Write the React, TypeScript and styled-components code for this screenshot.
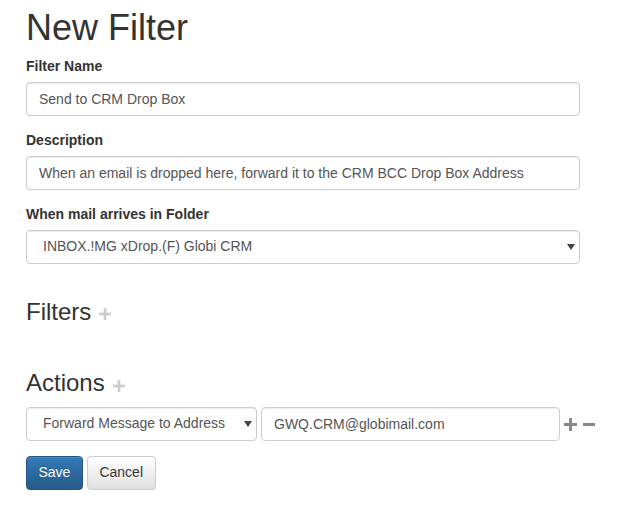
import React from "react";
import styled, { createGlobalStyle } from "styled-components";

const GlobalStyle = createGlobalStyle`
  html, body {
    margin: 0;
    padding: 0;
    background: #fff;
  }
  body {
    font-family: "Liberation Sans", Arial, Helvetica, sans-serif;
    font-size: 14px;
    line-height: 1.42857;
    color: #333;
  }
  * {
    box-sizing: border-box;
  }
`;

export const Page = styled.div`
  display: flex;
  flex-direction: column;
  align-items: flex-start;
  padding: 7.5px 0 0 26px;
`;

export const Title = styled.h1`
  font-size: 36px;
  font-weight: 400;
  line-height: 1.1;
  margin: 0 0 10px;
  color: #333;
`;

export const SectionTitle = styled.h3`
  font-size: 24px;
  font-weight: 400;
  line-height: 1.1;
  margin: 20px 0 10px;
  color: #333;
  display: flex;
  align-items: center;
  gap: 8px;
`;

export const FormGroup = styled.div`
  margin-bottom: 15px;
  width: 554px;
`;

export const Label = styled.label`
  display: block;
  font-weight: 700;
  margin-bottom: 5px;
`;

const fieldStyles = `
  display: block;
  height: 34px;
  padding: 6px 12px;
  font-family: "Liberation Sans", Arial, Helvetica, sans-serif;
  font-size: 14px;
  line-height: 1.42857;
  color: #555;
  background: #fff;
  border: 1px solid #ccc;
  border-radius: 4px;
  box-shadow: inset 0 1px 1px rgba(0, 0, 0, 0.075);
  outline: none;
`;

export const TextInput = styled.input<{ $width?: number }>`
  ${fieldStyles}
  flex: none;
  width: ${(p) => (p.$width ? `${p.$width}px` : "100%")};
`;

export const SelectWrap = styled.div<{ $width?: number }>`
  position: relative;
  width: ${(p) => (p.$width ? `${p.$width}px` : "100%")};
  flex: none;
`;

export const Select = styled.select`
  ${fieldStyles}
  width: 100%;
  padding-left: 16px;
  appearance: none;
  -webkit-appearance: none;
`;

export const Caret = styled.svg`
  position: absolute;
  right: 5px;
  top: 14px;
  pointer-events: none;
`;

export const EmptyList = styled.div`
  margin-bottom: 15px;
`;

export const ActionRow = styled.div`
  display: flex;
  align-items: center;
  margin-bottom: 15px;
`;

export const ActionInput = styled(TextInput)`
  margin-left: 4px;
`;

export const RowIcons = styled.div`
  display: flex;
  align-items: center;
  gap: 6px;
  margin-left: 4px;
  padding-top: 2px;
`;

export const Buttons = styled.div`
  display: flex;
  gap: 4px;
`;

export const Button = styled.button<{ $primary?: boolean }>`
  height: 34px;
  padding: 6px 11.5px;
  font-family: "Liberation Sans", Arial, Helvetica, sans-serif;
  font-size: 14px;
  line-height: 1.42857;
  border-radius: 4px;
  cursor: pointer;
  border: 1px solid ${(p) => (p.$primary ? "#245580" : "#ccc")};
  color: ${(p) => (p.$primary ? "#fff" : "#333")};
  text-shadow: ${(p) => (p.$primary ? "0 -1px 0 rgba(0,0,0,.2)" : "0 1px 0 #fff")};
  background-image: ${(p) =>
    p.$primary
      ? "linear-gradient(to bottom, #337ab7 0, #265a88 100%)"
      : "linear-gradient(to bottom, #fff 0, #e0e0e0 100%)"};
  box-shadow: inset 0 1px 0 rgba(255, 255, 255, 0.15), 0 1px 1px rgba(0, 0, 0, 0.075);
`;

const PlusIcon = ({ color, size = 13 }: { color: string; size?: number }) => (
  <svg width={size} height={size} viewBox="0 0 13 13">
    <rect x="5" y="0" width="3" height="13" fill={color} />
    <rect x="0" y="5" width="13" height="3" fill={color} />
  </svg>
);

const MinusIcon = ({ color }: { color: string }) => (
  <svg width={12} height={13} viewBox="0 0 12 13">
    <rect x="0" y="5" width="12" height="3" fill={color} />
  </svg>
);

const CaretDown = () => (
  <Caret width="8" height="6" viewBox="0 0 8 6">
    <path d="M0 0 H8 L4 6 Z" fill="#444" />
  </Caret>
);

const HeadingPlus = styled.span`
  display: inline-flex;
  padding-top: 4px;
`;

const App = () => {
  return (
    <>
      <GlobalStyle />
      <Page>
        <Title>New Filter</Title>

        <FormGroup>
          <Label>Filter Name</Label>
          <TextInput defaultValue="Send to CRM Drop Box" />
        </FormGroup>

        <FormGroup>
          <Label>Description</Label>
          <TextInput defaultValue="When an email is dropped here, forward it to the CRM BCC Drop Box Address" />
        </FormGroup>

        <FormGroup>
          <Label>When mail arrives in Folder</Label>
          <SelectWrap>
            <Select defaultValue="crm">
              <option value="crm">INBOX.!MG xDrop.(F) Globi CRM</option>
            </Select>
            <CaretDown />
          </SelectWrap>
        </FormGroup>

        <SectionTitle>
          Filters
          <HeadingPlus>
            <PlusIcon color="#ccc" size={12} />
          </HeadingPlus>
        </SectionTitle>
        <EmptyList />

        <SectionTitle>
          Actions
          <HeadingPlus>
            <PlusIcon color="#ccc" size={12} />
          </HeadingPlus>
        </SectionTitle>

        <ActionRow>
          <SelectWrap $width={231}>
            <Select defaultValue="forward">
              <option value="forward">Forward Message to Address</option>
            </Select>
            <CaretDown />
          </SelectWrap>
          <ActionInput $width={299} defaultValue="GWQ.CRM@globimail.com" />
          <RowIcons>
            <PlusIcon color="#888" />
            <MinusIcon color="#888" />
          </RowIcons>
        </ActionRow>

        <Buttons>
          <Button $primary>Save</Button>
          <Button>Cancel</Button>
        </Buttons>
      </Page>
    </>
  );
};

export default App;
